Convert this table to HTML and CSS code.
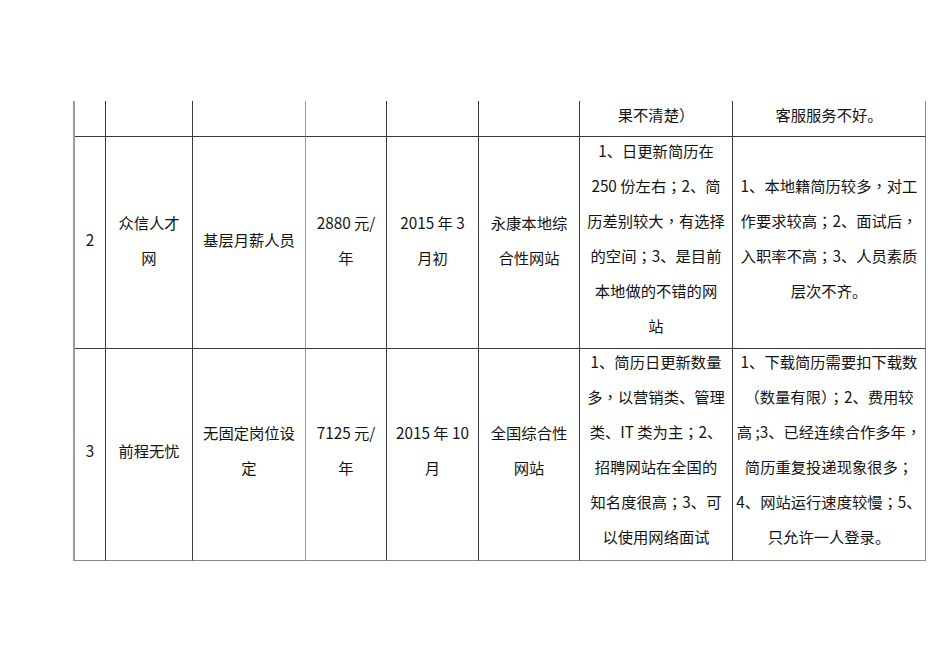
FILE: index.html
```html
<!DOCTYPE html>
<html lang="zh-CN">
<head>
<meta charset="utf-8">
<link rel="stylesheet" href="styles.css">
</head>
<body>
<div class="sheet">
  <div class="grid">
    <div class="cell top c1"></div>
    <div class="cell top c2"></div>
    <div class="cell top c3"></div>
    <div class="cell top c4"></div>
    <div class="cell top c5"></div>
    <div class="cell top c6"></div>
    <div class="cell top c7"><div class="txt">果不清楚<span class="p" lang="zh-TW">）</span></div></div>
    <div class="cell top c8"><div class="txt">客服服务不好。</div></div>

    <div class="cell c1"><div class="txt">2</div></div>
    <div class="cell c2"><div class="txt">众信人才<br>网</div></div>
    <div class="cell c3"><div class="txt">基层月薪人员</div></div>
    <div class="cell c4"><div class="txt">2880 元/<br>年</div></div>
    <div class="cell c5"><div class="txt">2015 年 3<br>月初</div></div>
    <div class="cell c6"><div class="txt">永康本地综<br>合性网站</div></div>
    <div class="cell c7 long"><div class="txt">1、日更新简历在<br>250 份左右<span class="p" lang="zh-TW">；</span>2、简<br>历差别较大<span class="p" lang="zh-TW">，</span>有选择<br>的空间<span class="p" lang="zh-TW">；</span>3、是目前<br>本地做的不错的网<br>站</div></div>
    <div class="cell c8 long"><div class="txt">1、本地籍简历较多<span class="p" lang="zh-TW">，</span>对工<br>作要求较高<span class="p" lang="zh-TW">；</span>2、面试后<span class="p" lang="zh-TW">，</span><br>入职率不高<span class="p" lang="zh-TW">；</span>3、人员素质<br>层次不齐。</div></div>

    <div class="cell c1 last"><div class="txt">3</div></div>
    <div class="cell c2 last"><div class="txt">前程无忧</div></div>
    <div class="cell c3 last"><div class="txt">无固定岗位设<br>定</div></div>
    <div class="cell c4 last"><div class="txt">7125 元/<br>年</div></div>
    <div class="cell c5 last"><div class="txt">2015 年 10<br>月</div></div>
    <div class="cell c6 last"><div class="txt">全国综合性<br>网站</div></div>
    <div class="cell c7 last long"><div class="txt">1、简历日更新数量<br>多<span class="p" lang="zh-TW">，</span>以营销类、管理<br>类、IT 类为主<span class="p" lang="zh-TW">；</span>2、<br>招聘网站在全国的<br>知名度很高<span class="p" lang="zh-TW">；</span>3、可<br>以使用网络面试</div></div>
    <div class="cell c8 last long"><div class="txt">1、下载简历需要扣下载数<br><span class="p" lang="zh-TW">（</span>数量有限<span class="p" lang="zh-TW">）；</span>2、费用较<br>高 ;3、已经连续合作多年<span class="p" lang="zh-TW">，</span><br>简历重复投递现象很多<span class="p" lang="zh-TW">；</span><br>4、网站运行速度较慢<span class="p" lang="zh-TW">；</span>5、<br>只允许一人登录。</div></div>
  </div>
</div>
</body>
</html>
```
FILE: styles.css
```css
html, body {
  margin: 0;
  padding: 0;
  background: #ffffff;
}

body {
  width: 950px;
  height: 672px;
  overflow: hidden;
  font-family: "Noto Sans CJK SC", "Noto Sans", sans-serif;
  font-size: 15.3px;
  color: #141414;
}

.sheet {
  padding-top: 101px;
  padding-left: 73px;
}

.grid {
  display: grid;
  grid-template-columns: 31px 87px 113px 81px 92px 101px 153px 193px;
  grid-template-rows: 36px 212px 212px;
  width: 853px;
  border-left: 2px solid #9a9a9a;
  box-sizing: border-box;
}

.cell {
  box-sizing: border-box;
  border-right: 1px solid #3a3a3a;
  border-bottom: 1px solid #3a3a3a;
  display: flex;
  align-items: center;
  justify-content: center;
  padding-bottom: 6px;
}

.txt {
  text-align: center;
  line-height: 35px;
  white-space: nowrap;
}

.cell.long {
  padding-bottom: 10px;
}

.cell.last {
  padding-bottom: 9px;
  border-bottom-color: #8a8a8a;
}

.cell.last.long {
  padding-bottom: 12px;
}

.cell.top {
  align-items: flex-end;
  padding-bottom: 4px;
}

.cell.c3 {
  border-right-color: #9a9a9a;
}

.cell.c8 {
  border-right-color: #8a8a8a;
}

.p {
  font-family: "Noto Sans CJK TC", "Noto Sans CJK SC", sans-serif;
}
```
